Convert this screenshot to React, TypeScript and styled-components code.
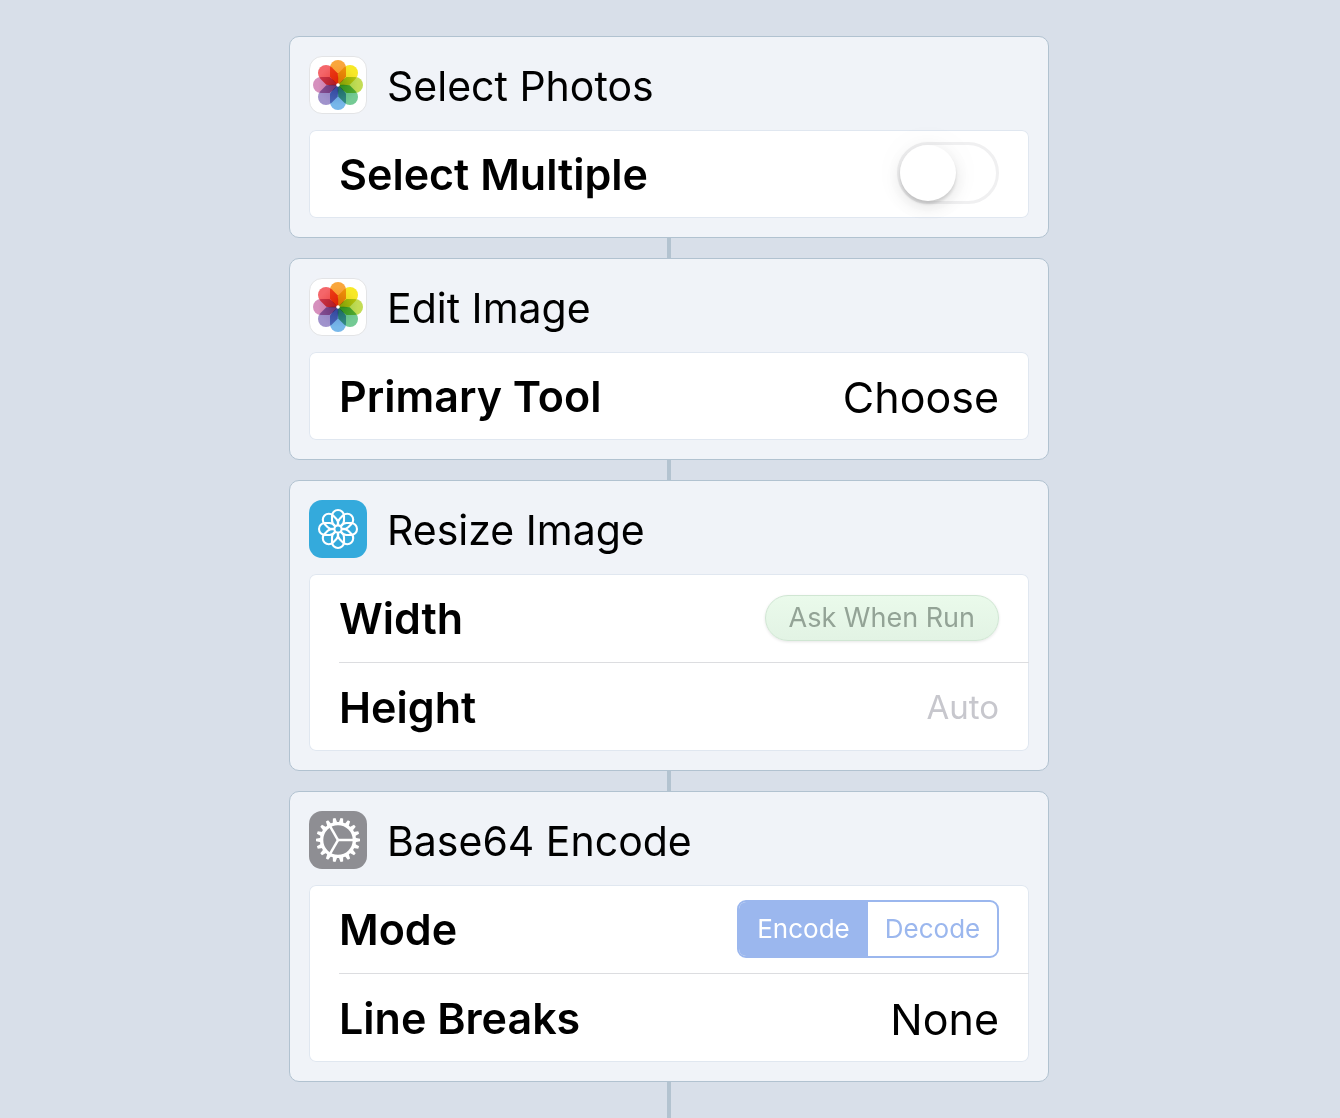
import React, { useState } from "react";
import styled, { createGlobalStyle, css } from "styled-components";

const GlobalStyle = createGlobalStyle`
  *, *::before, *::after { box-sizing: border-box; }
  body {
    margin: 0;
    background: #d8dfe9;
    color: #000;
    font-family: Inter, "Liberation Sans", sans-serif;
  }
  button, input, select { font-family: inherit; }
`;

const Page = styled.main`
  display: flex;
  flex-direction: column;
  align-items: center;
  min-height: 100vh;
  padding: 36px 22px 0 20px;
`;

const Connector = styled.div<{ $last?: boolean }>`
  width: 4px;
  background: #b3c3d0;
  ${(p) => (p.$last ? css`flex: 1 0 20px;` : css`flex: 0 0 20px;`)}
`;

const Card = styled.section`
  display: flex;
  flex-direction: column;
  gap: 16px;
  width: 100%;
  max-width: 760px;
  padding: 19px;
  border: 1px solid #b1c2d0;
  border-radius: 10px;
  background: #f0f3f8;
`;

const Header = styled.header`
  display: flex;
  align-items: center;
  gap: 20px;
`;

const Title = styled.h2`
  margin: 0;
  padding-top: 2px;
  font-size: 41px;
  line-height: 56px;
  font-weight: 400;
`;

const Panel = styled.div`
  border-radius: 7px;
  background: #fff;
  box-shadow: inset 0 0 0 1px #e0e7f0;
`;

const Row = styled.div`
  display: flex;
  align-items: center;
  justify-content: space-between;
  gap: 20px;
  min-height: 88px;
  margin-left: 30px;
  padding-right: 30px;

  & + & {
    min-height: 89px;
    border-top: 1px solid #dcdde0;
  }
`;

const labelText = css`
  font-size: 43px;
  line-height: 56px;
  font-weight: 600;
`;

const Label = styled.label`
  ${labelText}
`;

const GroupLabel = styled.span`
  ${labelText}
`;

const Switch = styled.input`
  appearance: none;
  flex: none;
  display: flex;
  width: 102px;
  height: 62px;
  margin: 0 0 2px;
  border: 3px solid #f0f0f1;
  border-radius: 31px;
  background: #fff;
  cursor: pointer;

  &::before {
    content: "";
    width: 56px;
    height: 56px;
    border-radius: 50%;
    background: #fff;
    box-shadow: 0 6px 16px rgba(0, 0, 0, 0.1), 0 3px 3px rgba(0, 0, 0, 0.12), 0 0 36px rgba(0, 0, 0, 0.04);
  }

  &:checked {
    justify-content: flex-end;
    border-color: #4cd964;
    background: #4cd964;
  }
`;

const Picker = styled.select`
  appearance: none;
  field-sizing: content;
  padding: 2px 0 0;
  border: 0;
  background: transparent;
  color: #000;
  font-size: 43px;
  line-height: 56px;
  text-align: right;
  cursor: pointer;
`;

const Variable = styled.button`
  height: 46px;
  padding: 0 23px;
  border: 1px solid #d0e6d3;
  border-radius: 23px;
  background: linear-gradient(#eafaeb, #e2f3e4);
  box-shadow: 0 1px 3px rgba(0, 0, 0, 0.1);
  color: #93a396;
  font-size: 27px;
  line-height: 42px;
  cursor: pointer;
`;

const NumberField = styled.input`
  flex: 1;
  min-width: 0;
  padding: 0;
  border: 0;
  background: transparent;
  color: #000;
  font-size: 33px;
  line-height: 56px;
  text-align: right;

  &::placeholder { color: #c7c7cd; opacity: 1; }
`;

const Segments = styled.div`
  display: grid;
  grid-template-columns: 1fr 1fr;
  width: 262px;
  height: 58px;
  border: 2px solid #9bb7ee;
  border-radius: 9px;
  overflow: hidden;
`;

const Segment = styled.label`
  display: flex;
  align-items: center;
  justify-content: center;
  color: #9bb7ee;
  font-size: 26px;
  line-height: 54px;
  cursor: pointer;

  &:has(input:checked) {
    background: #9bb7ee;
    color: #fff;
  }

  input {
    appearance: none;
    width: 0;
    height: 0;
    margin: 0;
  }
`;

const Icon = styled.svg`
  display: block;
  flex: none;
  width: 58px;
  height: 58px;
`;

const Petals = styled.g`
  isolation: isolate;
`;

const Petal = styled.path`
  mix-blend-mode: multiply;
`;

const ANGLES = [0, 45, 90, 135, 180, 225, 270, 315];

const petalColors: [string, string][] = [
  ["#f9a63c", "#f58a1f"],
  ["#f7e827", "#e0c81c"],
  ["#c3dc55", "#8cc63f"],
  ["#74ca94", "#4fb27c"],
  ["#78b8ea", "#5a8fd0"],
  ["#a093cc", "#8a78bd"],
  ["#d690bd", "#c06a9c"],
  ["#f4666a", "#e83a34"],
];

const PhotosIcon = ({ id }: { id: string }) => (
  <Icon viewBox="0 0 58 58" aria-hidden="true">
    <defs>
      {petalColors.map(([outer, inner], i) => (
        <linearGradient key={i} id={`${id}-${i}`} x1="0" y1="0" x2="0" y2="1">
          <stop offset="0.2" stopColor={outer} />
          <stop offset="1" stopColor={inner} />
        </linearGradient>
      ))}
    </defs>
    <rect x="0.5" y="0.5" width="57" height="57" rx="12.5" fill="#fff" stroke="#e3e4e6" />
    <Petals transform="translate(29 29)">
      {ANGLES.map((a, i) => (
        <Petal
          key={a}
          d="M-8 -17 A8 8 0 0 1 8 -17 V-8.5 Q5.5 -4.5 0 0 Q-5.5 -4.5 -8 -8.5 Z"
          fill={`url(#${id}-${i})`}
          transform={`rotate(${a})`}
        />
      ))}
      <circle r="1.8" fill="#fff" />
    </Petals>
  </Icon>
);

const ResizeIcon = () => (
  <Icon viewBox="0 0 58 58" aria-hidden="true">
    <rect width="58" height="58" rx="13" fill="#34aadc" />
    <g transform="translate(29 29)" fill="none" stroke="#fff" strokeWidth="2.1">
      {ANGLES.map((a) => (
        <path key={a} d="M-2.4 -2.4 Q-6 -5 -6 -8.5 V-13 A6 6 0 0 1 6 -13 V-8.5 Q6 -5 2.4 -2.4" transform={`rotate(${a})`} />
      ))}
      <circle r="3.6" />
    </g>
  </Icon>
);

const TEETH = 18;

const GearIcon = () => (
  <Icon viewBox="0 0 58 58" aria-hidden="true">
    <rect width="58" height="58" rx="13" fill="#8e8e93" />
    <g transform="translate(29 29)">
      {Array.from({ length: TEETH }, (_, i) => (
        <path key={i} d="M-2.3 -17 L-1.3 -22 H1.3 L2.3 -17 Z" fill="#fff" transform={`rotate(${90 + (i * 360) / TEETH})`} />
      ))}
      <circle r="16.4" fill="none" stroke="#fff" strokeWidth="3.4" />
      {[90, 210, 330].map((a) => (
        <path key={a} d="M0 0 V-16" stroke="#fff" strokeWidth="2.5" transform={`rotate(${a})`} />
      ))}
    </g>
  </Icon>
);

export default function App() {
  const [multiple, setMultiple] = useState(false);
  const [mode, setMode] = useState("Encode");

  return (
    <>
      <GlobalStyle />
      <Page>
        <Card>
          <Header>
            <PhotosIcon id="select" />
            <Title>Select Photos</Title>
          </Header>
          <Panel>
            <Row>
              <Label htmlFor="multiple">Select Multiple</Label>
              <Switch
                id="multiple"
                type="checkbox"
                role="switch"
                checked={multiple}
                onChange={(e) => setMultiple(e.target.checked)}
              />
            </Row>
          </Panel>
        </Card>
        <Connector />
        <Card>
          <Header>
            <PhotosIcon id="edit" />
            <Title>Edit Image</Title>
          </Header>
          <Panel>
            <Row>
              <Label htmlFor="tool">Primary Tool</Label>
              <Picker id="tool">
                <option>Choose</option>
              </Picker>
            </Row>
          </Panel>
        </Card>
        <Connector />
        <Card>
          <Header>
            <ResizeIcon />
            <Title>Resize Image</Title>
          </Header>
          <Panel>
            <Row>
              <Label htmlFor="width">Width</Label>
              <Variable id="width" type="button">Ask When Run</Variable>
            </Row>
            <Row>
              <Label htmlFor="height">Height</Label>
              <NumberField id="height" inputMode="numeric" placeholder="Auto" />
            </Row>
          </Panel>
        </Card>
        <Connector />
        <Card>
          <Header>
            <GearIcon />
            <Title>Base64 Encode</Title>
          </Header>
          <Panel>
            <Row>
              <GroupLabel id="mode">Mode</GroupLabel>
              <Segments role="radiogroup" aria-labelledby="mode">
                {["Encode", "Decode"].map((name) => (
                  <Segment key={name}>
                    <input type="radio" name="mode" checked={mode === name} onChange={() => setMode(name)} />
                    {name}
                  </Segment>
                ))}
              </Segments>
            </Row>
            <Row>
              <Label htmlFor="breaks">Line Breaks</Label>
              <Picker id="breaks">
                <option>None</option>
              </Picker>
            </Row>
          </Panel>
        </Card>
        <Connector $last />
      </Page>
    </>
  );
}
